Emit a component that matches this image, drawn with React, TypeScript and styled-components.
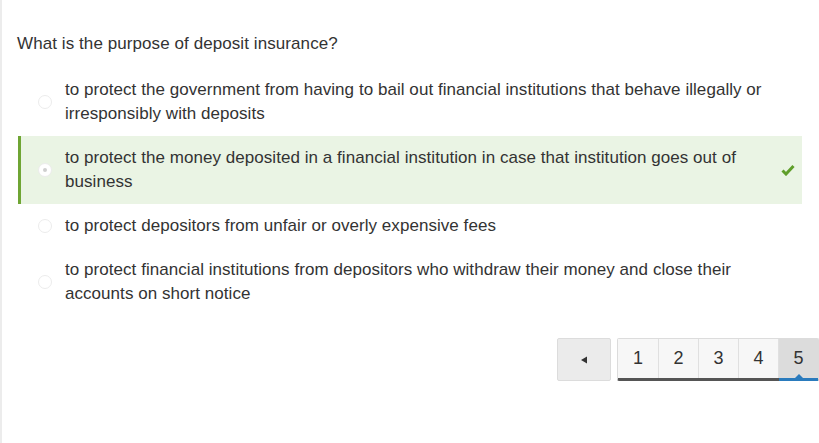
import React from "react";
import styled, { createGlobalStyle } from "styled-components";

const GlobalStyle = createGlobalStyle`
  html, body {
    margin: 0;
    padding: 0;
    background: #fff;
  }
  body {
    font-family: "Liberation Sans", Arial, sans-serif;
    color: #333;
  }
`;

type Option = { id: number; text: string; correct?: boolean };

const options: Option[] = [
  {
    id: 1,
    text: "to protect the government from having to bail out financial institutions that behave illegally or irresponsibly with deposits",
  },
  {
    id: 2,
    text: "to protect the money deposited in a financial institution in case that institution goes out of business",
    correct: true,
  },
  { id: 3, text: "to protect depositors from unfair or overly expensive fees" },
  {
    id: 4,
    text: "to protect financial institutions from depositors who withdraw their money and close their accounts on short notice",
  },
];

const pages = [1, 2, 3, 4, 5];

const App = () => (
  <>
    <GlobalStyle />
    <Page>
      <Question>What is the purpose of deposit insurance?</Question>
      <Options>
        {options.map((option) => (
          <Row key={option.id} $correct={option.correct}>
            <Radio $checked={option.correct} />
            <Answer>{option.text}</Answer>
            <Mark>
              {option.correct && (
                <svg width="14" height="12" viewBox="0 0 14 12">
                  <path
                    d="M1.5 6.5 L5 10 L12.5 2"
                    fill="none"
                    stroke="#5f9e2a"
                    strokeWidth="3"
                  />
                </svg>
              )}
            </Mark>
          </Row>
        ))}
      </Options>
      <Pager>
        <PrevButton aria-label="previous">
          <svg width="8" height="8" viewBox="0 0 8 8">
            <path d="M1 4 L7 0.5 L7 7.5 Z" fill="#333" />
          </svg>
        </PrevButton>
        <PageGroup>
          {pages.map((p) => (
            <PageButton key={p} $active={p === 5}>
              {p}
            </PageButton>
          ))}
        </PageGroup>
      </Pager>
    </Page>
  </>
);

const Page = styled.div`
  min-height: 443px;
  box-sizing: border-box;
  border-left: 2px solid #ececec;
  padding: 32px 0 0 15px;
`;

const Question = styled.div`
  font-size: 17px;
  line-height: 24px;
  letter-spacing: 0.08px;
  margin-bottom: 12px;
`;

const Options = styled.div`
  width: 784px;
  margin-left: 1px;
`;

const Row = styled.div<{ $correct?: boolean }>`
  display: flex;
  align-items: center;
  padding: 10px 0;
  box-sizing: border-box;
  border-left: 3px solid ${(p) => (p.$correct ? "#6fa534" : "transparent")};
  background: ${(p) => (p.$correct ? "#eaf4e4" : "transparent")};
`;

const Radio = styled.span<{ $checked?: boolean }>`
  flex: none;
  width: 12px;
  height: 12px;
  margin: 0 13px 0 17px;
  border-radius: 50%;
  border: 1px solid #ececec;
  background: #fff;
  position: relative;

  &:after {
    content: "";
    display: ${(p) => (p.$checked ? "block" : "none")};
    position: absolute;
    left: 4px;
    top: 4px;
    width: 4px;
    height: 4px;
    border-radius: 50%;
    background: #cfcfcf;
  }
`;

const Answer = styled.div`
  flex: 1;
  font-size: 17px;
  line-height: 24px;
  letter-spacing: 0.05px;
  color: #333;
`;

const Mark = styled.div`
  flex: none;
  width: 28px;
  display: flex;
  justify-content: center;
  padding-left: 6px;
`;

const Pager = styled.div`
  display: flex;
  justify-content: flex-end;
  gap: 6px;
  margin-top: 22px;
`;

const PrevButton = styled.button`
  width: 54px;
  height: 43px;
  border: 1px solid #dcdcdc;
  border-radius: 2px;
  background: #ebebeb;
  display: flex;
  align-items: center;
  justify-content: center;
  padding: 0;
`;

const PageGroup = styled.div`
  display: flex;
  height: 43px;
  box-sizing: border-box;
  border: 1px solid #dcdcdc;
  border-bottom: 3px solid #555;
  border-radius: 2px;
  background: #f5f5f5;
`;

const PageButton = styled.button<{ $active?: boolean }>`
  position: relative;
  width: 40px;
  border: none;
  border-left: 1px solid #e0e0e0;
  background: ${(p) => (p.$active ? "#dcdcdc" : "#f7f7f7")};
  font-family: "Liberation Sans", Arial, sans-serif;
  font-size: 18px;
  color: #333;
  padding: 0;

  &:first-child {
    border-left: none;
  }

  &:after {
    content: "";
    display: ${(p) => (p.$active ? "block" : "none")};
    position: absolute;
    left: 0;
    right: 0;
    bottom: -3px;
    height: 3px;
    background: #2a7bbd;
  }

  &:before {
    content: "";
    display: ${(p) => (p.$active ? "block" : "none")};
    position: absolute;
    left: 50%;
    bottom: 0;
    margin-left: -4px;
    border-left: 4px solid transparent;
    border-right: 4px solid transparent;
    border-bottom: 4px solid #2a7bbd;
  }
`;

export default App;
